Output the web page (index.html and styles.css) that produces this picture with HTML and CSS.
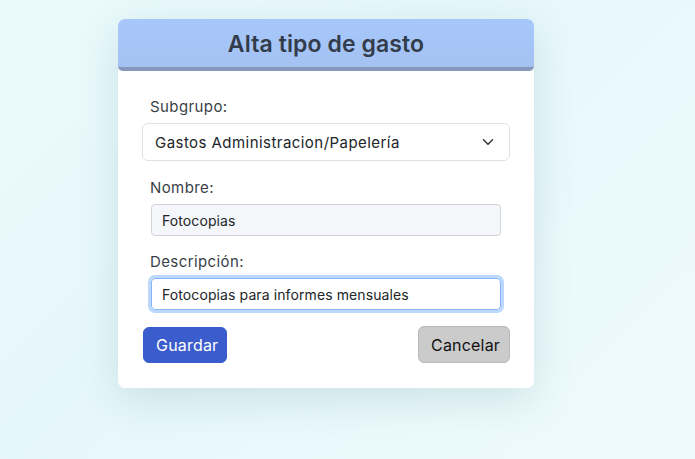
FILE: index.html
```html
<!DOCTYPE html>
<html lang="es">
<head>
<meta charset="utf-8">
<title>Alta tipo de gasto</title>
<link rel="stylesheet" href="styles.css">
</head>
<body>
<div class="page">
  <div class="card">
    <div class="card-header"><h1>Alta tipo de gasto</h1></div>
    <form class="card-body">
      <label class="lbl">Subgrupo:</label>
      <div class="select">
        <span>Gastos Administracion/Papelería</span>
        <svg width="12" height="8" viewBox="0 0 12 8"><path d="M1.5 1.8 L6 6.2 L10.5 1.8" fill="none" stroke="#343a40" stroke-width="1.6" stroke-linecap="round" stroke-linejoin="round"/></svg>
      </div>
      <label class="lbl">Nombre:</label>
      <div class="input readonly">Fotocopias</div>
      <label class="lbl">Descripción:</label>
      <div class="input focused">Fotocopias para informes mensuales</div>
      <div class="actions">
        <button type="button" class="btn btn-primary">Guardar</button>
        <button type="button" class="btn btn-secondary">Cancelar</button>
      </div>
    </form>
  </div>
</div>
</body>
</html>
```

FILE: styles.css
```css
* { box-sizing: border-box; }
html, body { margin: 0; height: 100%; }
body {
  font-family: Inter, "Noto Sans", sans-serif;
  background: linear-gradient(135deg, #eafafc 0%, #e6f7fb 40%, #eefbfd 100%);
  color: #212529;
}
.page {
  padding: 19px 0 0 118px;
}
.card {
  width: 416px;
  border-radius: 7px;
  box-shadow: 0 12px 40px rgba(60, 110, 110, 0.16);
}
.card-header {
  height: 52px;
  background: linear-gradient(180deg, #a7c7fb 0%, #a4c2f2 100%);
  border-bottom: 4px solid #8799bb;
  border-radius: 7px 7px 5px 5px;
  display: flex;
  align-items: center;
  justify-content: center;
}
.card-header h1 {
  margin: 0;
  font-size: 23px;
  font-weight: 600;
  color: #333c4b;
  letter-spacing: 0.1px;
  padding-top: 2px;
}
.card-body {
  background: #fff;
  border-radius: 0 0 7px 7px;
  padding: 25px 24px 25px 24px;
  display: flex;
  flex-direction: column;
}
.lbl {
  font-size: 15px;
  line-height: 22px;
  color: #3a3f47;
  margin-left: 8px;
  margin-bottom: 5px;
  letter-spacing: 0.4px;
}
.select {
  height: 38px;
  border: 1px solid #dee2e6;
  border-radius: 6px;
  padding: 0 15px 0 12px;
  display: flex;
  align-items: center;
  justify-content: space-between;
  font-size: 15px;
  letter-spacing: 0.45px;
  color: #212529;
  margin-bottom: 16px;
}
.input {
  height: 32px;
  margin: 0 9px;
  border: 1px solid #ced4da;
  border-radius: 4px;
  padding: 0 10px;
  display: flex;
  align-items: center;
  font-size: 14px;
  letter-spacing: 0.1px;
  color: #212529;
}
.input.readonly {
  background: #f4f6f9;
  margin-bottom: 15px;
}
.input.focused {
  border-color: #86b7fe;
  box-shadow: 0 0 0 3px #bcd8fd;
  margin-bottom: 17px;
}
.actions {
  display: flex;
  justify-content: space-between;
  align-items: center;
  padding-left: 1px;
}
.btn {
  font-family: inherit;
  font-size: 16px;
  border-radius: 6px;
  height: 36px;
  padding: 0 12px;
  cursor: pointer;
  letter-spacing: 0.2px;
}
.btn-primary {
  background: #3a5ccc;
  color: #fff;
  border: 1px solid #3a5ccc;
  width: 84px;
}
.btn-secondary {
  background: #cbcbcb;
  color: #111;
  border: 1px solid #b8b8b8;
  width: 92px;
  height: 37px;
  margin-top: -1px;
}
```
